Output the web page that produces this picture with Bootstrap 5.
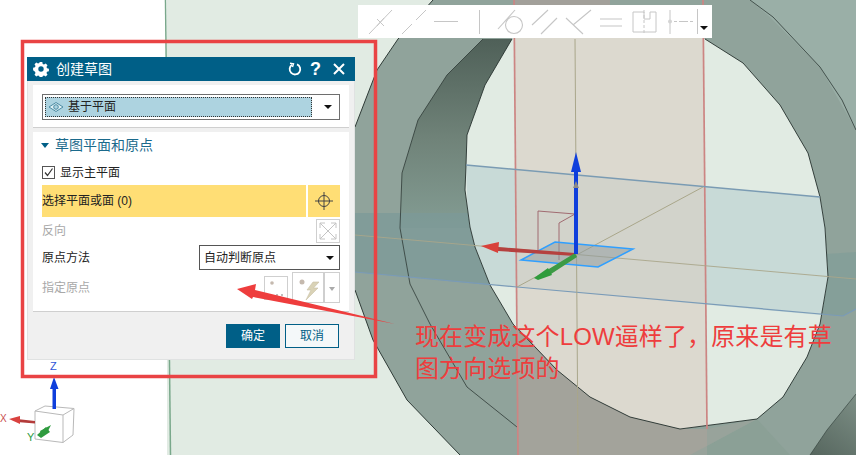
<!DOCTYPE html>
<html lang="zh">
<head>
<meta charset="utf-8">
<title>创建草图</title>
<link href="https://cdn.jsdelivr.net/npm/bootstrap@5.3.0/dist/css/bootstrap.min.css" rel="stylesheet">
<style>
html,body{margin:0;background:#fff;overflow:hidden}
body{font-family:"Liberation Sans","Noto Sans CJK SC",sans-serif;font-size:12px;color:#222}
.cad-stage{position:relative;width:856px;height:455px;overflow:hidden;background:#fff}
.cad-scene,.cad-overlay{position:absolute;left:0;top:0}
.cad-overlay{pointer-events:none}
.cad-toolbar{position:absolute;left:358px;top:5px;width:354px;height:33px;background:#fff;padding-left:6px}
.cad-toolbar svg{display:block;flex:none}
.cad-tb-end{margin-left:3px}
.cad-tb-caret{margin-left:2px;margin-top:12px}
.cad-dialog{position:absolute;left:27px;top:57px;width:328px;background:#f0f0f0;border:solid #e0e2e2;border-width:0 1px 1px 1px}
.cad-head{height:24px;margin:0 -1px;background:#005f87;color:#fff;font-size:14px;padding:0 10px 0 6px}
.cad-head .cad-title{margin-left:7px;line-height:24px}
.cad-q{font-size:18px;line-height:24px}
.cad-panel{background:#fff;margin:0 5px;border-bottom:1px solid #cfcfcf;padding:0 9px}
.cad-panel.first{margin-top:4px;padding-top:9px;padding-bottom:7px;height:43px}
.cad-panel.second{margin-top:4px;height:180px}
.cad-group{height:26px;font-size:14px;color:#1b6a8c;line-height:26px}
.cad-tri{width:0;height:0;border-left:4.5px solid transparent;border-right:4.5px solid transparent;border-top:5px solid #005f87;margin:0 6px 0 -1px}
.cad-drop{border:1px solid #6e6e6e;height:26px;background:#fff;padding:2px;font-size:12px}
.cad-drop .sel{flex:1;height:20px;background:#add3e0;outline:1px dotted #333;outline-offset:-1px;padding-left:3px}
.cad-caret{width:0;height:0;border-left:4px solid transparent;border-right:4px solid transparent;border-top:4.5px solid #111}
.cad-drop .cad-caret{margin:0 5px 0 12px}
.cad-check{height:27px;padding-top:2px}
.cad-box{width:13px;height:13px;border:1px solid #555;margin-right:5px;background:#fff}
.cad-box svg{display:block}
.cad-yellow{height:32px;gap:2px}
.cad-yellow .lab{flex:1;background:#ffde75;line-height:32px;font-size:12px}
.cad-yellow .tar{width:32px;background:#ffde75}
.cad-row{margin-top:2px;height:24px}
.cad-row.m{height:25px}
.cad-row.p{height:31px}
.cad-mute{color:#a8a8a8}
.cad-tool{border:1px solid #cfcfcf;background:#fff}
.cad-method{width:141px;height:25px;border:1px solid #555;padding:0 5px 0 4px}
.cad-foot{padding:12px 15px 11px 0;gap:5px}
.cad-foot .btn{width:54px;height:24px;padding:0;border-radius:0;font-size:12px;line-height:22px}
.cad-ok{background:#005f87;border:1px solid #005f87;color:#fff}
.cad-ok:hover{background:#005f87;color:#fff}
.cad-no{background:#f4f8f9;border:1px solid #005f87;color:#005f87}
.cad-note{position:absolute;left:415px;top:321px;width:430px;color:#ee3d3d;font-size:24px;line-height:32px;letter-spacing:.12px;font-family:"Liberation Sans","Noto Sans CJK SC",sans-serif}
.cad-z{position:absolute;left:50px;top:359px;color:#2e55d8;font-size:11px;line-height:14px}
.cad-x{position:absolute;left:0;top:412px;color:#c9504f;font-size:10px;line-height:14px}
.cad-y{position:absolute;left:27px;top:430px;color:#2f9b3f;font-size:11px;line-height:14px}
</style>
</head>
<body>
<div class="cad-stage">
  <svg class="cad-scene" width="856" height="455" viewBox="0 0 856 455">
    <defs>
      <linearGradient id="gBarrel" x1="0" y1="39" x2="0" y2="240" gradientUnits="userSpaceOnUse">
        <stop offset="0" stop-color="#4f6058"/><stop offset=".5" stop-color="#708379"/><stop offset="1" stop-color="#86a097"/>
      </linearGradient>
      <linearGradient id="gCorner" x1="856" y1="394" x2="810" y2="455" gradientUnits="userSpaceOnUse">
        <stop offset="0" stop-color="#7d8f86"/><stop offset="1" stop-color="#56665e"/>
      </linearGradient>
      <clipPath id="holeClip"><path d="M512 39L530 16L610 5L660 14L705 39L743 63L780 105L808 153L820 197L825 228L828 277L820 324L807 357L783 397L757 419L680 429L630 417L590 397L557 370L513 324L490 285L475 247L470 227L465 190L466 165L467 135L485 85Z"/></clipPath>
    </defs>
    <rect x="167" y="0" width="689" height="455" fill="#e1ebe3"/>
    <path d="M165.500 0L170.500 455" stroke="#79a88b" stroke-width="1.500" fill="none"/>
    <path d="M433 0L398 39L377 70L355 127L355 290L373 340L407 400L460 455L856 455L856 0Z" fill="#90a39b"/>
    <path d="M750 0L770 17L820 67L856 130L856 0Z" fill="#9aafa7"/>
    <path d="M433 0L398 39L377 70L355 127M355 290L373 340L407 400L460 455" fill="none" stroke="#2e3a36" stroke-width="1"/>
    <path d="M750 0L773 17L820 67L842 100L856 130" fill="none" stroke="#2e3a36" stroke-width=".8"/>
    <path d="M483 39L447 75L418 120L402 173L400 228L470 228L465 190L466 165L467 135L485 85L512 39Z" fill="url(#gBarrel)"/>
    <path d="M355 213L473 213L490 285L355 272Z" fill="#7c9a98" opacity=".75"/>
    <path d="M826 254L856 252L856 309L843 316L822 314Z" fill="#7f9c98" opacity=".6"/>
    <path d="M483 39L447 75L418 120L402 173L400 228L410 284L430 324L467 387L517 427L580 455" fill="none" stroke="#2e3a36" stroke-width=".8"/>
    <path d="M757 419L690 455L790 455L757 419Z" fill="#8ba096"/>
    <path d="M856 394L827 430L810 455L856 455Z" fill="url(#gCorner)"/>
    <path d="M856 394L827 430L810 455" fill="none" stroke="#2e3a36" stroke-width=".6"/>
    <path d="M512 39L530 16L610 5L660 14L705 39L743 63L780 105L808 153L820 197L825 228L828 277L820 324L807 357L783 397L757 419L680 429L630 417L590 397L557 370L513 324L490 285L475 247L470 227L465 190L466 165L467 135L485 85Z" fill="#e1ebe3"/>
    <g clip-path="url(#holeClip)">
      <path d="M466 165L830 198L830 316L517 287L470 282Z" fill="#c8dad7"/>
      <path d="M514 0L703 0L707 455L518 455Z" fill="#d8cfc4" opacity=".62"/>
    </g>
    <path d="M515 0L610 0L610 5L530 16L514 37Z" fill="#a2a09a"/>
    <path d="M518 328L557 370L590 397L630 417L680 429L707 429L707 455L518 455Z" fill="#a3a39b"/>
    <path d="M707 429L757 419L690 455L707 455Z" fill="#98a39b"/>
    <path d="M512 39L485 85L467 135L466 165L465 190L470 227L475 247L490 285L513 324L557 370L590 397L630 417L680 429L757 419L783 397L807 357L820 324L828 277L825 228L820 197L808 153L780 105L743 63L705 39" fill="none" stroke="#25302c" stroke-width=".9"/>
    <path d="M514 0L518 455" stroke="#cc8583" stroke-width="1.700"/>
    <path d="M703 0L707 429" stroke="#cc8583" stroke-width="1.700"/>
    <path d="M466 165L820 197" stroke="#7a9bb3" stroke-width="1.500"/>
    <path d="M355 272L517 287L843 316L856 309" stroke="#7a9bb8" stroke-width="1.200" fill="none"/>
    <path d="M575 39L578 455" stroke="#a9a68a" stroke-width="1"/>
    <path d="M703 187L517 287" stroke="#a9a68a" stroke-width="1"/>
    <path d="M355 235L856 279" stroke="#a9a68a" stroke-width=".9"/>
    <path d="M538 250L538 211L575 214M559 260L559 223L575 214" fill="none" stroke="#9b5f66" stroke-width=".9"/>
    <path d="M555 242L633 249L598 267L521 260Z" fill="#8e9a9e" fill-opacity=".5" stroke="#2f9fff" stroke-width="1.500"/>
    <path d="M498 247L575 253L575 256L498 251Z" fill="#b5413f"/>
    <path d="M481 246L499 242L498 253Z" fill="#d8413a"/>
    <path d="M575 253L544 272L548 276L577 257Z" fill="#3d9a45"/>
    <path d="M534 278L548 268L552 275L538 280Z" fill="#2f9c3c"/>
    <path d="M574 172H578V254H574Z" fill="#0f3fdc"/>
    <path d="M576 152L581 172L571 172Z" fill="#0f3fdc"/>
    <path d="M576 181L579 188H573Z" fill="#8e8b85"/>
    <path d="M35 411L45 406L74 408.500L63 415ZM35 411L35 439L63 442.500L63 415M63 442.500L73 435L74 408.500" fill="#fff" stroke="#b9b9b9" stroke-width="1"/>
    <path d="M52.500 384H56V409H52.500Z" fill="#0f3fdc"/>
    <path d="M54 377L58.500 389H50Z" fill="#0f3fdc"/>
    <path d="M17 419L35 421V423.500L17 422Z" fill="#b33b3a"/>
    <path d="M9 419L20 416L20 424Z" fill="#d9423f"/>
    <path d="M37 435L46 427L50 432L41 438Z" fill="#2f9b3f"/>
    <path d="M40 431L51 425L48 431L42 436Z" fill="#2f9b3f"/>
  </svg>

  <div class="cad-z">Z</div>
  <div class="cad-x">X</div>
  <div class="cad-y">Y</div>

  <div class="cad-toolbar d-flex align-items-center">
    <svg width="33" height="33" viewBox="0 0 33 33" fill="none" stroke="#c6c6c6" stroke-width="1"><path d="M5 29L28 5M13 14L20 21M20 13L13 21"/></svg>
    <svg width="33" height="33" viewBox="0 0 33 33" fill="none" stroke="#c6c6c6" stroke-width="1"><path d="M5 29L15 19M19 15L29 5"/></svg>
    <svg width="33" height="33" viewBox="0 0 33 33" fill="none" stroke="#c6c6c6" stroke-width="1"><path d="M4 16.500H28"/></svg>
    <svg width="33" height="33" viewBox="0 0 33 33" fill="none" stroke="#c6c6c6" stroke-width="1"><path d="M16.500 5V29"/></svg>
    <svg width="33" height="33" viewBox="0 0 33 33" fill="none" stroke="#c6c6c6" stroke-width="1.100"><circle cx="18" cy="20" r="8.500"/><path d="M2 24L19 5"/></svg>
    <svg width="33" height="33" viewBox="0 0 33 33" fill="none" stroke="#c6c6c6" stroke-width="1.100"><path d="M3 20L19 5M12 29L28 13"/></svg>
    <svg width="33" height="33" viewBox="0 0 33 33" fill="none" stroke="#c6c6c6" stroke-width="1.100"><path d="M4 13L21 29M11 20L29 5"/></svg>
    <svg width="33" height="33" viewBox="0 0 33 33" fill="none" stroke="#c6c6c6" stroke-width="1.100"><path d="M5 14H27M5 21H27"/></svg>
    <svg width="33" height="33" viewBox="0 0 33 33" fill="none" stroke="#c6c6c6" stroke-width="1"><path d="M5 7H16V14H22V7H28V27H5Z"/><path d="M16 5V30" stroke-dasharray="3 2"/></svg>
    <svg width="33" height="33" viewBox="0 0 33 33" fill="none" stroke="#c6c6c6" stroke-width="1"><path d="M9 5V29"/><circle cx="9" cy="16.500" r="2" fill="#d4d4d4" stroke="none"/><path d="M13 16.500H32" stroke-dasharray="3 2 9 2"/></svg>
    <div class="d-flex align-items-center flex-grow-1 h-100 cad-tb-end">
      <svg width="1" height="33" viewBox="0 0 1 33"><path d="M.5 4V29" stroke="#c6c6c6"/></svg>
      <span class="cad-caret cad-tb-caret"></span>
    </div>
  </div>

  <div class="cad-dialog">
    <div class="cad-head d-flex align-items-center">
      <svg width="16" height="16" viewBox="0 0 16 16"><path fill="#fff" fill-rule="evenodd" d="M6.700 1h2.600l.4 1.900 1.300.6 1.700-1 1.800 1.800-1 1.700.5 1.300 1.900.4v2.600l-1.900.4-.5 1.300 1 1.700-1.800 1.800-1.700-1-1.300.5-.4 1.900H6.700l-.4-1.900-1.300-.5-1.700 1-1.800-1.800 1-1.700-.5-1.300L.1 9.300V6.700L2 6.300l.5-1.300-1-1.700 1.800-1.800 1.700 1 1.300-.6ZM8 5.300a2.700 2.700 0 1 0 0 5.400 2.700 2.700 0 0 0 0-5.400Z"/></svg>
      <span class="cad-title flex-grow-1">创建草图</span>
      <svg class="me-2" width="14" height="14" viewBox="0 0 14 14" fill="none" stroke="#fff" stroke-width="1.800"><path d="M4 2.800A5.300 5.300 0 1 0 9 2.300"/><path d="M2 1.200L5.500 1.800L4.500 5" stroke-width="1.400"/></svg>
      <span class="me-2 fw-bold cad-q">?</span>
      <svg class="ms-1" width="12" height="12" viewBox="0 0 12 12" fill="none" stroke="#fff" stroke-width="2"><path d="M1 1L11 11M11 1L1 11"/></svg>
    </div>

    <div class="cad-panel first">
      <div class="cad-drop d-flex align-items-center">
        <div class="sel d-flex align-items-center">
          <svg class="me-1" width="16" height="12" viewBox="0 0 16 12" fill="none"><path d="M1 6L8 1.500L15 6L8 10.500Z" fill="#dff0f4" stroke="#4c8ba3"/><circle cx="8" cy="6" r="2.300" fill="#add3e0" stroke="#4c8ba3"/></svg>
          <span>基于平面</span>
        </div>
        <span class="cad-caret"></span>
      </div>
    </div>

    <div class="cad-panel second">
      <div class="cad-group d-flex align-items-center"><span class="cad-tri"></span><span>草图平面和原点</span></div>
      <div class="cad-check d-flex align-items-center">
        <span class="cad-box"><svg width="11" height="11" viewBox="0 0 11 11" fill="none" stroke="#333" stroke-width="1.200"><path d="M2 5.500L4.500 8.500L9.500 1.500"/></svg></span>
        <span>显示主平面</span>
      </div>
      <div class="cad-yellow d-flex">
        <div class="lab">选择平面或面 (0)</div>
        <div class="tar d-flex align-items-center justify-content-center">
          <svg width="20" height="20" viewBox="0 0 20 20" fill="none" stroke="#444" stroke-width="1"><circle cx="10" cy="10" r="5.500"/><path d="M10 1V19M1 10H19"/></svg>
        </div>
      </div>
      <div class="cad-row d-flex align-items-center justify-content-between cad-mute">
        <span>反向</span>
        <span class="cad-tool d-flex">
          <svg width="22" height="22" viewBox="0 0 22 22" fill="none" stroke="#c4c4c4" stroke-width="1"><path d="M3 3L19 19M19 3L3 19M3 8V3H8M14 3H19V8M3 14V19H8M14 19H19V14"/></svg>
        </span>
      </div>
      <div class="cad-row m d-flex align-items-center justify-content-between">
        <span>原点方法</span>
        <div class="cad-method d-flex align-items-center justify-content-between">
          <span>自动判断原点</span><span class="cad-caret"></span>
        </div>
      </div>
      <div class="cad-row p d-flex justify-content-between">
        <span class="cad-mute align-self-center">指定原点</span>
        <div class="d-flex align-items-center">
          <span class="cad-tool d-flex me-1">
            <svg width="22" height="22" viewBox="0 0 22 22"><circle cx="7" cy="6" r="1.800" fill="#c5b9ae"/><circle cx="12" cy="18" r="1" fill="#aaa"/><circle cx="17" cy="18" r="1" fill="#aaa"/></svg>
          </span>
          <span class="cad-tool d-flex">
            <svg width="30" height="29" viewBox="0 0 30 29"><circle cx="9" cy="9" r="2.500" fill="#c5b9ae"/><path d="M20 9L14 17H18L13 27L25 15H20.500L26 9Z" fill="#d9d2b6" stroke="#c9c1a6" stroke-width=".6"/></svg>
          </span>
          <span class="cad-tool d-flex align-items-center justify-content-center">
            <svg width="14" height="29" viewBox="0 0 14 29"><path d="M4 14H10L7 18Z" fill="#aaa"/></svg>
          </span>
        </div>
      </div>
    </div>

    <div class="cad-foot d-flex justify-content-end">
      <button type="button" class="btn cad-ok">确定</button>
      <button type="button" class="btn cad-no">取消</button>
    </div>
  </div>

  <svg class="cad-overlay" width="856" height="455" viewBox="0 0 856 455">
    <rect x="22.500" y="41.500" width="353" height="335" fill="none" stroke="#e94344" stroke-width="3.500"/>
    <path d="M237 289L256 284L255 290L395 324L253 297L252 299Z" fill="#ee3d3d"/>
  </svg>

  <div class="cad-note">现在变成这个LOW逼样了，原来是有草<br>图方向选项的</div>
</div>
</body>
</html>
